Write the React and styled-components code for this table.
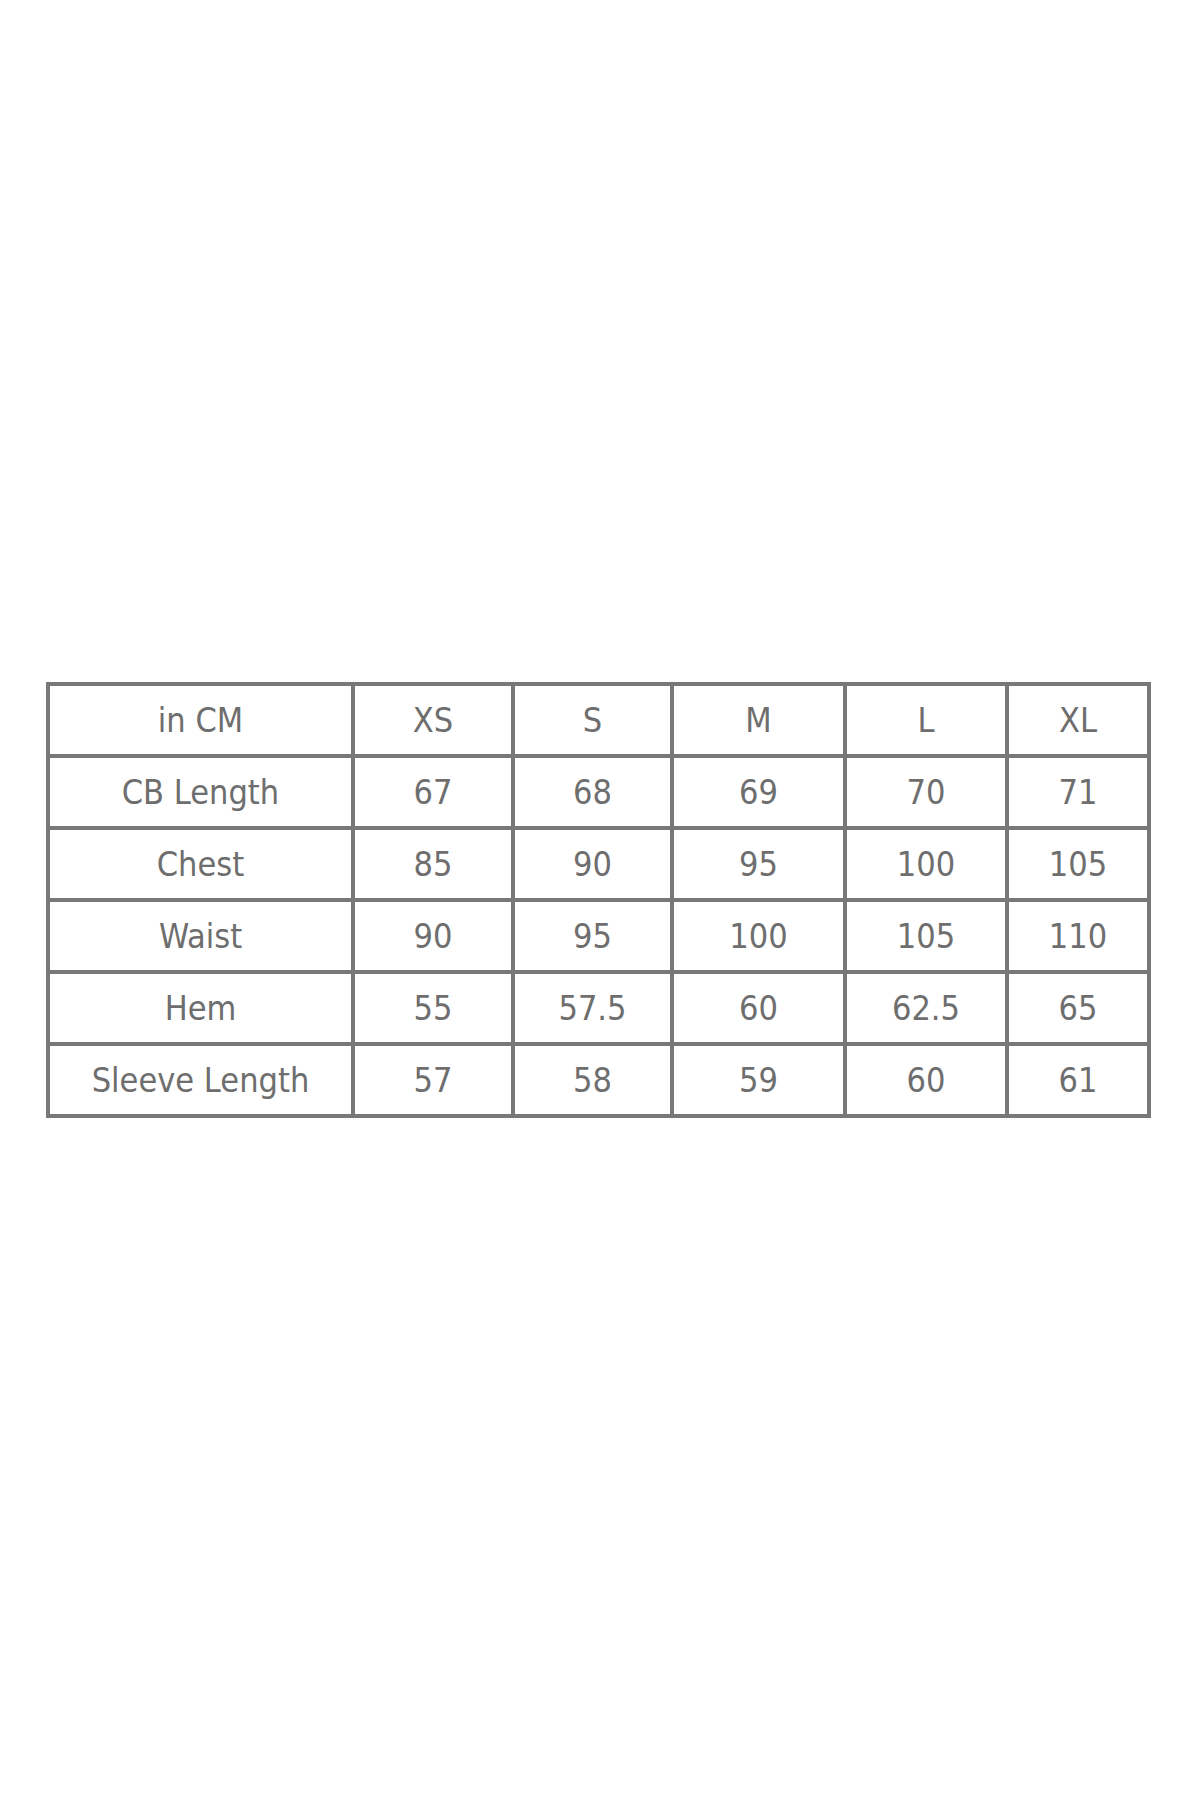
import React from 'react';
import styled, { createGlobalStyle } from 'styled-components';

const GlobalStyle = createGlobalStyle`
    html, body {
        margin: 0;
        padding: 0;
        background: #ffffff;
    }
`;

const Page = styled.div`
    height: 1800px;
    padding-right: 3px;
    display: flex;
    align-items: center;
    justify-content: center;
    background: #ffffff;
`;

const SizeTable = styled.table`
    border-collapse: collapse;
    table-layout: fixed;
    border: 4px solid #787878;
    font-family: "DejaVu Sans Condensed", "DejaVu Sans", sans-serif;
    font-stretch: condensed;
    font-size: 34px;
    color: #6e6e6e;
`;

const Row = styled.tr`
    height: 72px;
`;

const Cell = styled.td`
    border: 4px solid #787878;
    text-align: center;
    vertical-align: middle;
    padding: 0;
    white-space: nowrap;
`;

const columns = [305, 160, 159, 173, 162, 142];

const rows = [
    ['in CM', 'XS', 'S', 'M', 'L', 'XL'],
    ['CB Length', '67', '68', '69', '70', '71'],
    ['Chest', '85', '90', '95', '100', '105'],
    ['Waist', '90', '95', '100', '105', '110'],
    ['Hem', '55', '57.5', '60', '62.5', '65'],
    ['Sleeve Length', '57', '58', '59', '60', '61'],
];

const App = () => {
    return (
        <>
            <GlobalStyle />
            <Page>
                <SizeTable>
                    <colgroup>
                        {columns.map((w, i) => (
                            <col key={i} style={{ width: w }} />
                        ))}
                    </colgroup>
                    <tbody>
                        {rows.map((r, i) => (
                            <Row key={i}>
                                {r.map((v, j) => (
                                    <Cell key={j}>{v}</Cell>
                                ))}
                            </Row>
                        ))}
                    </tbody>
                </SizeTable>
            </Page>
        </>
    );
};

export default App;
